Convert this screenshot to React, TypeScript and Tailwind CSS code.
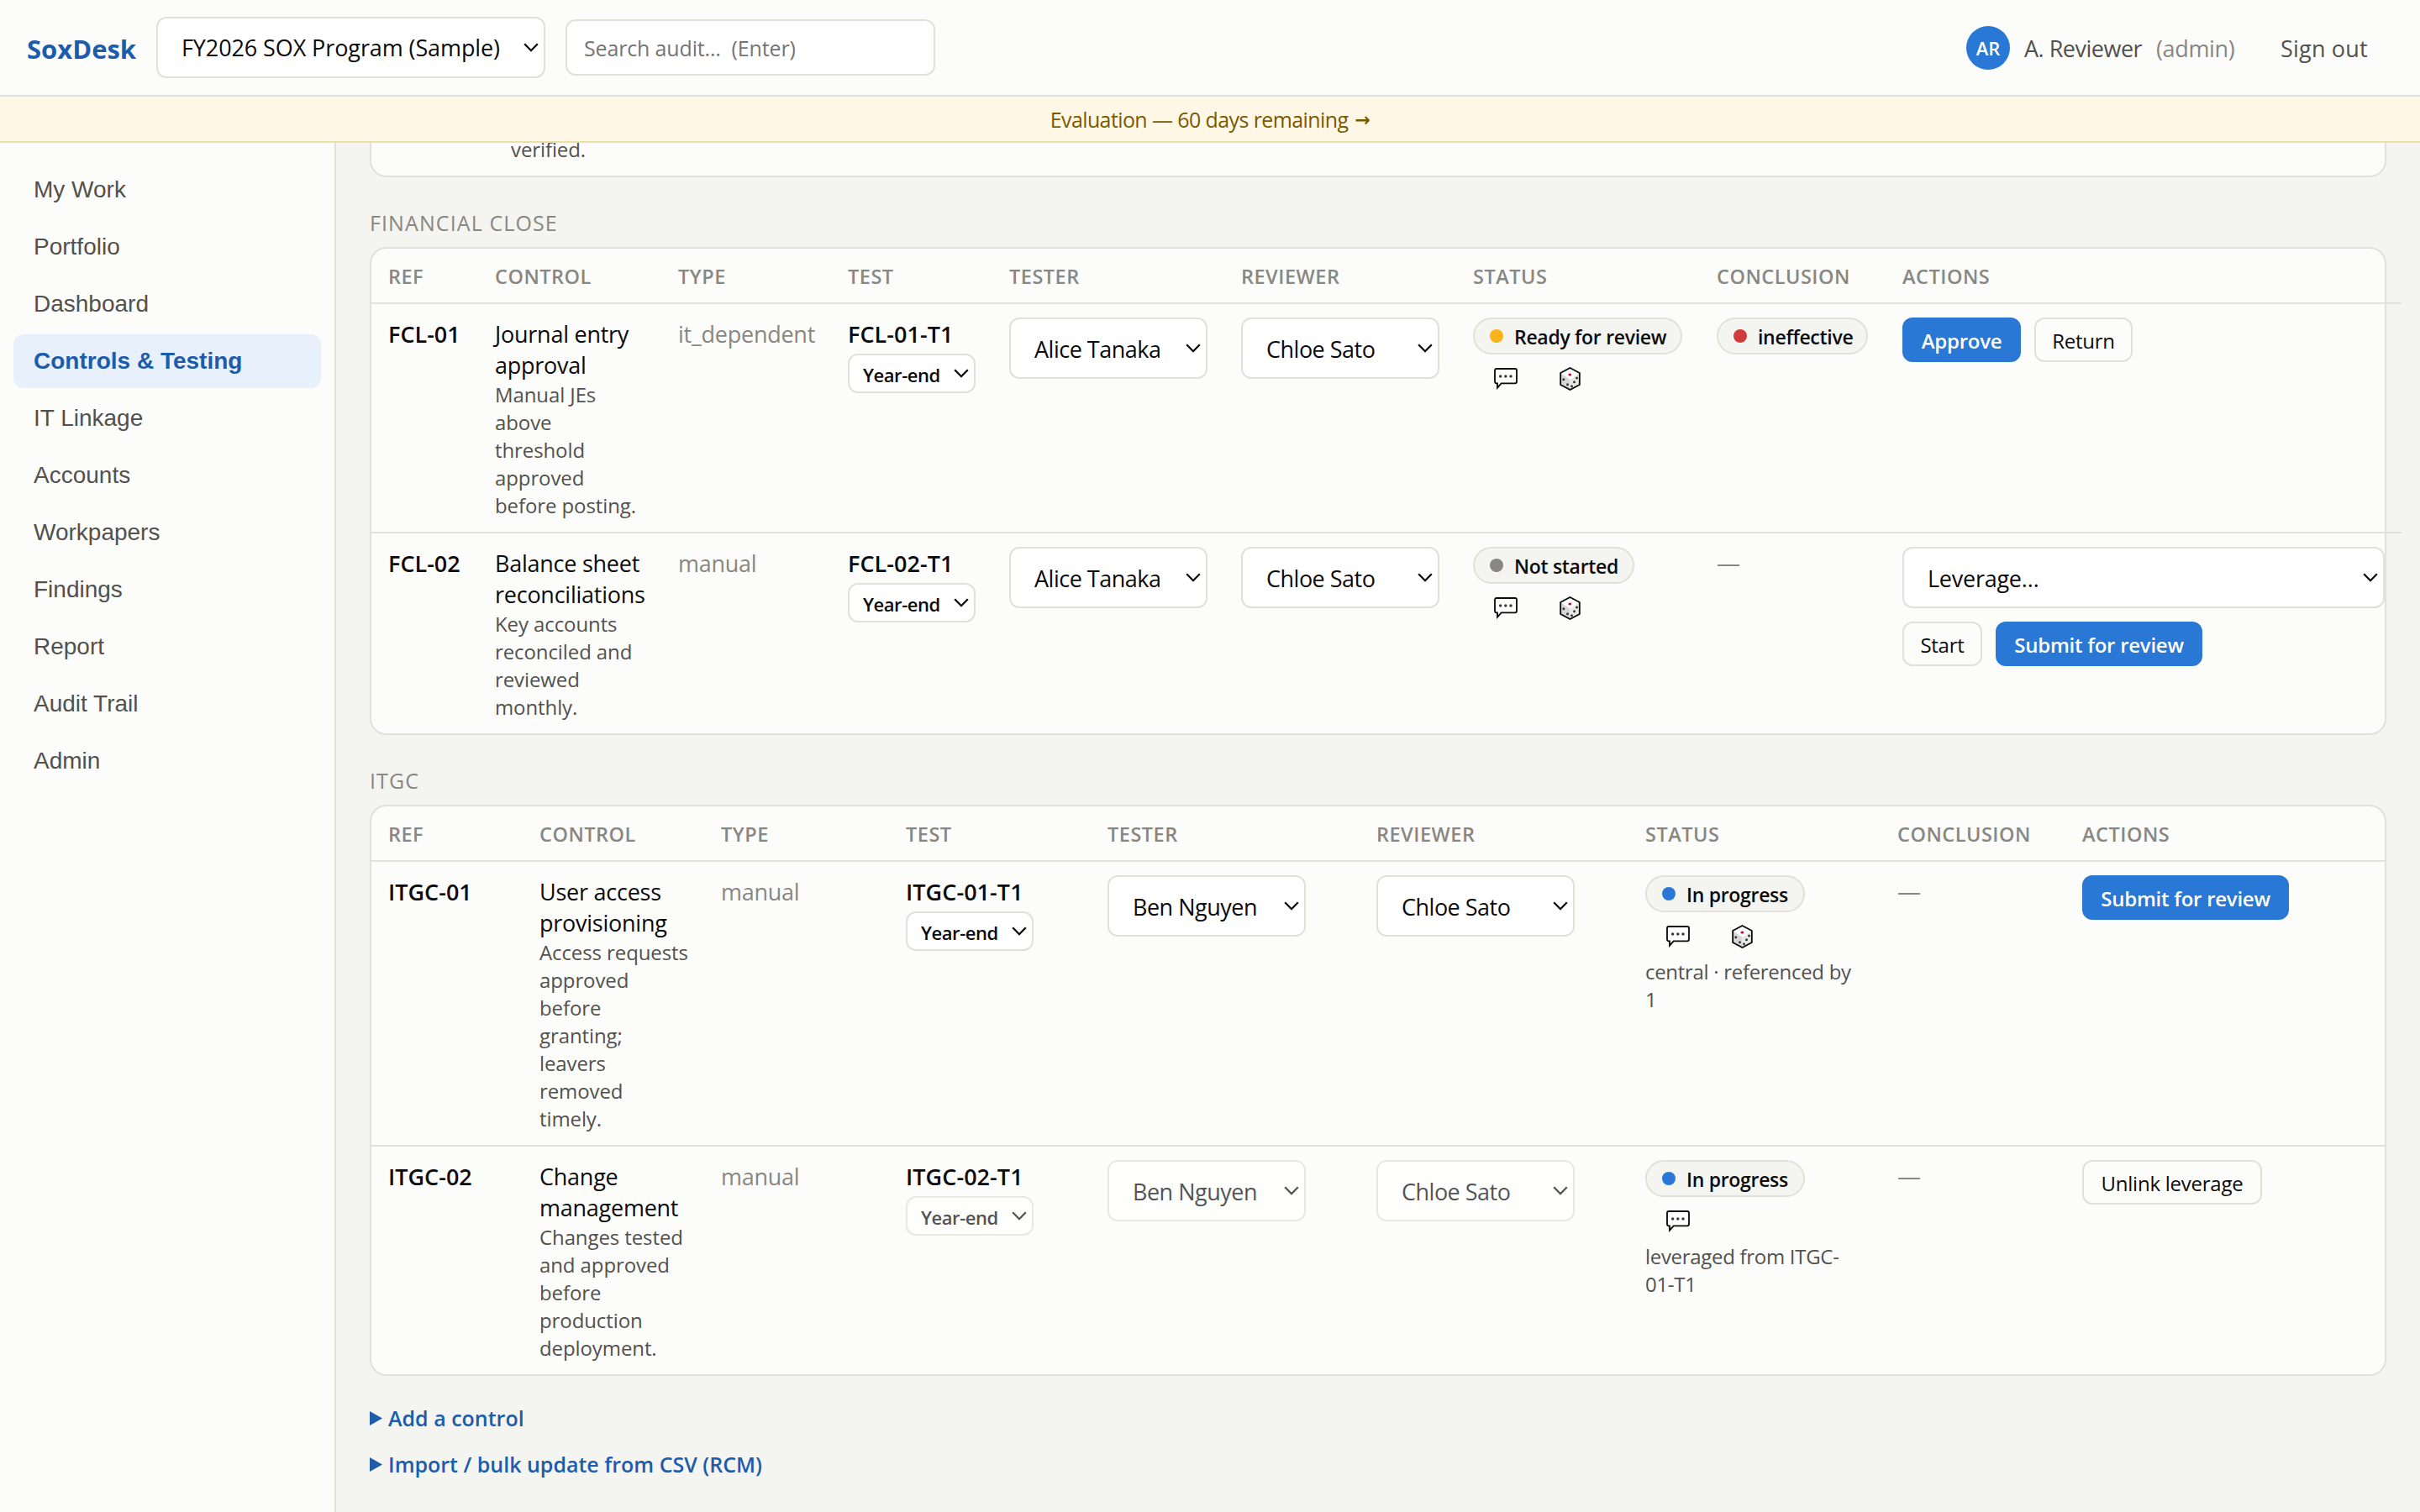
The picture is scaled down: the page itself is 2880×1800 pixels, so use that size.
import clsx from 'clsx';

interface SelectProps {
  value: string;
  className: string;
  disabled?: boolean;
}

interface ControlRow {
  ref: string;
  name: string;
  description: string;
  type: string;
  test: string;
  tester: string;
  reviewer: string;
  status: string;
  sampling?: boolean;
  note?: string;
  conclusion?: string;
  leveraged?: boolean;
  actions: string[];
}

interface ControlGroupProps {
  title: string;
  tableWidth: string;
  columns: string[];
  rows: ControlRow[];
}

const navItems = [
  'My Work',
  'Portfolio',
  'Dashboard',
  'Controls & Testing',
  'IT Linkage',
  'Accounts',
  'Workpapers',
  'Findings',
  'Report',
  'Audit Trail',
  'Admin',
];

const headings = [
  'Ref',
  'Control',
  'Type',
  'Test',
  'Tester',
  'Reviewer',
  'Status',
  'Conclusion',
  'Actions',
];

const pillStyles: Record<string, { dot: string; width: string }> = {
  'Ready for review': { dot: 'bg-[#fab219]', width: 'w-[249px]' },
  'Not started': { dot: 'bg-[#898781]', width: 'w-[192px]' },
  'In progress': { dot: 'bg-[#2a78d6]', width: 'w-[190px]' },
  ineffective: { dot: 'bg-[#d03b3b]', width: 'w-[180px]' },
};

const buttonStyles: Record<string, { width: string; primary?: boolean }> = {
  Approve: { width: 'w-[141px]', primary: true },
  Return: { width: 'w-[117px]' },
  Start: { width: 'w-[95px]' },
  'Submit for review': { width: 'w-[246px]', primary: true },
  'Unlink leverage': { width: 'w-[214px]' },
};

const financialClose: ControlRow[] = [
  {
    ref: 'FCL-01',
    name: 'Journal entry\napproval',
    description: 'Manual JEs\nabove\nthreshold\napproved\nbefore posting.',
    type: 'it_dependent',
    test: 'FCL-01-T1',
    tester: 'Alice Tanaka',
    reviewer: 'Chloe Sato',
    status: 'Ready for review',
    sampling: true,
    conclusion: 'ineffective',
    actions: ['Approve', 'Return'],
  },
  {
    ref: 'FCL-02',
    name: 'Balance sheet\nreconciliations',
    description: 'Key accounts\nreconciled and\nreviewed\nmonthly.',
    type: 'manual',
    test: 'FCL-02-T1',
    tester: 'Alice Tanaka',
    reviewer: 'Chloe Sato',
    status: 'Not started',
    sampling: true,
    actions: ['Leverage…', 'Start', 'Submit for review'],
  },
];

const itgc: ControlRow[] = [
  {
    ref: 'ITGC-01',
    name: 'User access\nprovisioning',
    description:
      'Access requests\napproved\nbefore\ngranting;\nleavers\nremoved\ntimely.',
    type: 'manual',
    test: 'ITGC-01-T1',
    tester: 'Ben Nguyen',
    reviewer: 'Chloe Sato',
    status: 'In progress',
    sampling: true,
    note: 'central · referenced by\n1',
    actions: ['Submit for review'],
  },
  {
    ref: 'ITGC-02',
    name: 'Change\nmanagement',
    description: 'Changes tested\nand approved\nbefore\nproduction\ndeployment.',
    type: 'manual',
    test: 'ITGC-02-T1',
    tester: 'Ben Nguyen',
    reviewer: 'Chloe Sato',
    status: 'In progress',
    note: 'leveraged from ITGC-\n01-T1',
    leveraged: true,
    actions: ['Unlink leverage'],
  },
];

function Chevron() {
  return (
    <svg width="18" height="11" viewBox="0 0 18 11" fill="none" stroke="currentColor" strokeWidth="2.3">
      <path d="M1.2 1.2 9 9.2l7.8-8" />
    </svg>
  );
}

function CommentIcon() {
  return (
    <svg width="28" height="26" viewBox="0 0 84 78">
      <path
        d="M9 3h66q6 0 6 6v40q0 6-6 6H26L12 71V55H9q-6 0-6-6V9q0-6 6-6z"
        fill="#fff"
        stroke="#0b0b0b"
        strokeWidth="5.5"
      />
      <g fill="#3a3a3a">
        <circle cx="23" cy="30" r="5.2" />
        <circle cx="41.5" cy="30" r="5.2" />
        <circle cx="60" cy="30" r="5.2" />
      </g>
    </svg>
  );
}

function DiceIcon() {
  return (
    <svg width="25" height="28" viewBox="0 0 74 84">
      <path d="M37 3 71 21v42L37 81 3 63V21z" fill="#fff" />
      <path d="M4 22l33 22v37L4 63z" fill="#d6d6d6" />
      <path d="M70 22 37 44v37l33-18z" fill="#e8e8e8" />
      <path d="M37 3 71 21v42L37 81 3 63V21z" fill="none" stroke="#0b0b0b" strokeWidth="5.5" />
      <ellipse cx="36.5" cy="27" rx="6" ry="4.5" fill="#c8102e" />
      <g fill="#3a3a3a">
        <circle cx="14" cy="44" r="4.5" />
        <circle cx="28" cy="62" r="4.5" />
        <circle cx="61" cy="39" r="4.5" />
        <circle cx="52" cy="53" r="4.5" />
        <circle cx="43" cy="68" r="4.5" />
      </g>
    </svg>
  );
}

function Select({ value, className, disabled }: SelectProps) {
  return (
    <div
      className={clsx(
        'flex items-center justify-between rounded-xl border-2 border-[#e1e0d9] bg-white pr-1.5',
        disabled && 'opacity-70',
        className,
      )}
    >
      <span className="pt-0.5 whitespace-nowrap">{value}</span>
      <Chevron />
    </div>
  );
}

function Pill({ label }: { label: string }) {
  return (
    <div
      className={clsx(
        'flex h-11 items-center gap-[13px] rounded-full border-2 border-[#e1e0d9] bg-[#f4f4f0] pl-[18px]',
        pillStyles[label].width,
      )}
    >
      <span className={clsx('size-4 shrink-0 rounded-full', pillStyles[label].dot)} />
      <span className="pt-[3px] text-[23px] font-semibold tracking-[-0.3px] whitespace-nowrap">{label}</span>
    </div>
  );
}

function Button({ label }: { label: string }) {
  const { width, primary } = buttonStyles[label];
  return (
    <button
      className={clsx(
        'h-[53px] rounded-xl border-2 pt-[3px] text-2xl leading-none whitespace-nowrap',
        primary
          ? 'border-[#2a78d6] bg-[#2a78d6] font-semibold tracking-[-0.25px] text-white'
          : 'border-[#e1e0d9] bg-[#fcfcfb]',
        width,
      )}
    >
      {label}
    </button>
  );
}

function Row({ row, last }: { row: ControlRow; last: boolean }) {
  const cell = clsx('px-5 py-4 align-top', !last && 'border-b-2 border-[#e1e0d9]');
  return (
    <tr>
      <td className={cell}>
        <div className="pt-px font-semibold tracking-normal whitespace-nowrap">{row.ref}</div>
      </td>
      <td className={clsx(cell, 'whitespace-pre')}>
        <div className="-mb-px pt-px">{row.name}</div>
        <div className="-mb-px pt-px text-2xl leading-[33px] tracking-[-0.1px] text-[#52514e]">{row.description}</div>
      </td>
      <td className={cell}>
        <div className="pt-px text-[#898781]">{row.type}</div>
      </td>
      <td className={cell}>
        <div className="pt-px font-semibold tracking-[0.05px] whitespace-nowrap">{row.test}</div>
        <Select
          value="Year-end"
          disabled={row.leveraged}
          className="mt-[5px] h-[47px] w-[152px] pl-4 text-[22px] leading-none font-semibold tracking-[-0.45px]"
        />
      </td>
      <td className={cell}>
        <Select value={row.tester} disabled={row.leveraged} className="h-[73px] w-[236px] pl-7 tracking-[-0.5px]" />
      </td>
      <td className={cell}>
        <Select value={row.reviewer} disabled={row.leveraged} className="h-[73px] w-[236px] pl-7 tracking-[-0.5px]" />
      </td>
      <td className={cell}>
        <Pill label={row.status} />
        <div className="mt-[15px] flex h-7 items-center gap-[50px] pl-[25px]">
          <CommentIcon />
          {row.sampling && <DiceIcon />}
        </div>
        {row.note && (
          <div className="mt-[11px] text-2xl leading-[33px] tracking-[-0.3px] whitespace-pre text-[#52514e]">
            {row.note}
          </div>
        )}
      </td>
      <td className={cell}>
        {row.conclusion ? <Pill label={row.conclusion} /> : <div className="text-[28px] text-[#898781]">—</div>}
      </td>
      <td className={cell}>
        <div className="flex flex-wrap gap-4">
          {row.actions.map((action) =>
            buttonStyles[action] ? (
              <Button key={action} label={action} />
            ) : (
              <Select key={action} value={action} className="h-[73px] w-full pl-7" />
            ),
          )}
        </div>
      </td>
    </tr>
  );
}

function ControlGroup({ title, tableWidth, columns, rows }: ControlGroupProps) {
  return (
    <section className="pt-[37px]">
      <h3 className="mb-3 pt-px text-[25px] leading-[33px] tracking-[1.1px] text-[#898781] uppercase">{title}</h3>
      <div className="rounded-[20px] border-2 border-[#e1e0d9] bg-[#fcfcfb]">
        <table
          className={clsx(
            'table-fixed border-separate border-spacing-0 text-[27px] leading-[37px] tracking-[-0.25px]',
            tableWidth,
          )}
        >
          <colgroup>
            {columns.map((width, i) => (
              <col key={i} className={width} />
            ))}
          </colgroup>
          <thead>
            <tr>
              {headings.map((heading) => (
                <th
                  key={heading}
                  className="h-[66px] border-b-2 border-[#e1e0d9] px-5 pt-[3px] text-left text-[23.5px] font-semibold tracking-[0.5px] text-[#898781] uppercase"
                >
                  {heading}
                </th>
              ))}
            </tr>
          </thead>
          <tbody>
            {rows.map((row, i) => (
              <Row key={row.ref} row={row} last={i === rows.length - 1} />
            ))}
          </tbody>
        </table>
      </div>
    </section>
  );
}

function Disclosure({ label }: { label: string }) {
  return (
    <div className="flex items-center gap-[7px] text-[25px] leading-[35px] font-semibold text-[#1c5cab]">
      <svg width="15" height="17" viewBox="0 0 15 17" fill="currentColor">
        <path d="M0 0l15 8.5L0 17z" />
      </svg>
      <span>{label}</span>
    </div>
  );
}

export default function App() {
  return (
    <div className="flex h-screen flex-col overflow-hidden bg-[#f4f4f0] font-['Open_Sans','Noto_Sans',sans-serif] text-[#0b0b0b]">
      <header className="flex h-[115px] shrink-0 items-center border-b-2 border-[#e1e0d9] bg-[#fcfcfb] pr-[61px] pl-8 text-[27px]">
        <div className="w-[154px] pt-[3px] text-[31px] font-bold text-[#1c5cab]">SoxDesk</div>
        <Select
          value="FY2026 SOX Program (Sample)"
          className="h-[73px] w-[463px] pl-7 tracking-[-0.1px]"
        />
        <div className="ml-6 flex h-[67px] w-[440px] items-center rounded-xl border-2 border-[#e1e0d9] bg-white pt-0.5 pl-5 text-[25px] tracking-[-0.15px] whitespace-pre text-[#757575]">
          {'Search audit…  (Enter)'}
        </div>
        <div className="ml-auto flex size-[52px] items-center justify-center rounded-full bg-[#2a78d6] pt-0.5 text-[22px] font-semibold text-white">
          AR
        </div>
        <div className="ml-[17px] w-[157px] pt-[3px] tracking-[-0.5px] whitespace-nowrap text-[#52514e]">A. Reviewer</div>
        <div className="w-[148px] pt-[3px] tracking-[-0.35px] text-[#898781]">(admin)</div>
        <div className="w-[105px] pt-[3px] tracking-[0.2px] whitespace-nowrap text-[#52514e]">Sign out</div>
      </header>

      <div className="flex h-[55px] shrink-0 items-center justify-center border-b-2 border-[#f0dca8] bg-[#fff7e6] pt-0.5 text-[25px] tracking-[-0.6px] text-[#7a5a00]">
        <span>Evaluation — 60 days remaining</span>
        <span className="ml-2 font-['DejaVu_Sans'] text-[22px] font-bold">→</span>
      </div>

      <div className="flex min-h-0 flex-1">
        <nav className="flex w-[400px] shrink-0 flex-col gap-1 border-r-2 border-[#e1e0d9] bg-[#fcfcfb] px-4 pt-6 font-['Liberation_Sans',sans-serif] text-[28px] text-[#52514e]">
          {navItems.map((item) => (
            <a
              key={item}
              className={clsx(
                'flex h-16 items-center rounded-xl px-6',
                item === 'Controls & Testing' && 'bg-[#e8f0fc] font-bold text-[#1c5cab]',
              )}
            >
              {item}
            </a>
          ))}
        </nav>

        <main className="min-w-0 flex-1 overflow-hidden pr-10 pl-10">
          {/* tail of the previous group, scrolled under the banner */}
          <div className="flex h-[41px] items-end rounded-b-[20px] border-2 border-t-0 border-[#e1e0d9] bg-[#fcfcfb] pb-[15px] pl-[166px] text-2xl leading-[33px] tracking-[-0.1px] text-[#52514e]">
            verified.
          </div>

          <ControlGroup
            title="Financial Close"
            tableWidth="w-[2416px]"
            columns={[
              'w-[127px]',
              'w-[218px]',
              'w-[202px]',
              'w-[192px]',
              'w-[276px]',
              'w-[276px]',
              'w-[290px]',
              'w-[221px]',
              'w-[614px]',
            ]}
            rows={financialClose}
          />
          <ControlGroup
            title="ITGC"
            tableWidth="w-[2396px]"
            columns={[
              'w-[180px]',
              'w-[216px]',
              'w-[220px]',
              'w-[240px]',
              'w-[320px]',
              'w-[320px]',
              'w-[300px]',
              'w-[220px]',
              'w-[380px]',
            ]}
            rows={itgc}
          />

          <div className="mt-[33px] flex flex-col gap-5">
            <Disclosure label="Add a control" />
            <Disclosure label="Import / bulk update from CSV (RCM)" />
          </div>
        </main>
      </div>
    </div>
  );
}
